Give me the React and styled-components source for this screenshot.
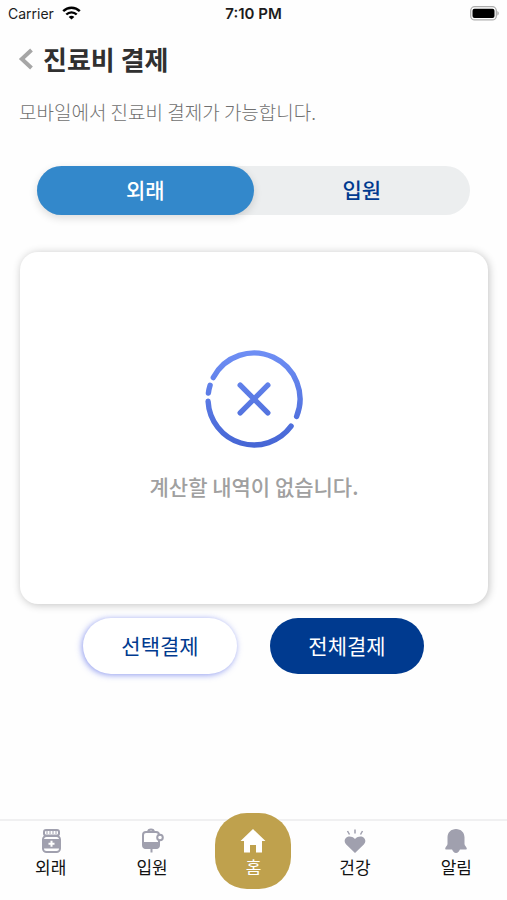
import React, { useState } from 'react';
import styled, { createGlobalStyle } from 'styled-components';

const color = {
  navy: '#003a8f',
  blue: '#3388cb',
  gold: '#bfa14d',
  icon: '#a0a0ae',
  track: '#eceeef',
};

const GlobalStyle = createGlobalStyle`
  * {
    box-sizing: border-box;
  }

  body {
    margin: 0;
    background-color: #fefefe;
    font-family: 'Noto Sans CJK KR', sans-serif;
  }

  button {
    padding: 0;
    border: 0;
    background: none;
    font-family: inherit;
    cursor: pointer;
  }
`;

const Screen = styled.div`
  display: flex;
  flex-direction: column;
  min-height: 100vh;
`;

const StatusBar = styled.div`
  display: grid;
  grid-template-columns: 1fr auto 1fr;
  align-items: center;
  height: 26px;
  padding: 0 8px;
  color: #1c1c1c;
  font-family: Inter, sans-serif;
  font-size: 14px;
`;

const Carrier = styled.div`
  display: flex;
  align-items: center;
  gap: 8px;
`;

const Clock = styled.time`
  font-size: 15px;
  font-weight: 600;
`;

const Battery = styled.svg`
  justify-self: end;
`;

const Header = styled.header`
  display: flex;
  align-items: center;
  gap: 9px;
  height: 40px;
  margin-top: 13px;
  padding: 0 18px;
`;

const BackButton = styled.button`
  display: flex;
`;

const Title = styled.h1`
  margin: 0;
  color: #303030;
  font-size: 26px;
  font-weight: 700;
  line-height: 40px;
`;

const Description = styled.p`
  margin: 18px 19px 0;
  color: #707070;
  font-size: 19px;
  font-weight: 300;
  line-height: 30px;
`;

const Tabs = styled.div`
  display: flex;
  height: 49px;
  margin: 39px 37px 0;
  border-radius: 25px;
  background-color: ${color.track};
`;

const Tab = styled.button`
  flex: 1;
  padding-bottom: 4px;
  border-radius: 25px;
  background-color: ${({ $active }) => ($active ? color.blue : 'transparent')};
  box-shadow: ${({ $active }) => ($active ? '0 3px 8px rgba(0, 0, 0, 0.14)' : 'none')};
  color: ${({ $active }) => ($active ? '#fff' : color.navy)};
  font-size: 21px;
  font-weight: 500;
`;

const Card = styled.section`
  display: flex;
  flex-direction: column;
  align-items: center;
  justify-content: center;
  gap: 22px;
  min-height: 352px;
  margin: 37px 19px 0 20px;
  padding-bottom: 4px;
  border-radius: 18px;
  background-color: #fff;
  box-shadow: 1px 1px 9px rgba(0, 0, 0, 0.24);
`;

const EmptyText = styled.p`
  margin: 0;
  color: #a0a0a0;
  font-size: 21px;
  font-weight: 500;
  line-height: 32px;
`;

const Actions = styled.div`
  display: flex;
  justify-content: center;
  gap: 33px;
  margin-top: 14px;
`;

const PayButton = styled.button`
  width: 154px;
  height: 56px;
  padding-bottom: 2px;
  border-radius: 28px;
  background-color: ${({ $primary }) => ($primary ? color.navy : '#fff')};
  box-shadow: ${({ $primary }) => ($primary ? 'none' : '-1px 1px 6px rgba(70, 90, 230, 0.6)')};
  color: ${({ $primary }) => ($primary ? '#fff' : color.navy)};
  font-size: 21px;
  font-weight: 400;
`;

const BottomNav = styled.nav`
  display: grid;
  grid-template-columns: repeat(5, 1fr);
  height: 81px;
  margin-top: auto;
  border-top: 2px solid #f0f0f1;
`;

const NavItem = styled.a`
  display: flex;
  flex-direction: column;
  align-items: center;
  padding-top: 7px;
  color: #111;
  font-size: 17px;
  line-height: 26px;
  text-decoration: none;
`;

const HomeItem = styled(NavItem)`
  justify-self: center;
  width: 76px;
  height: 76px;
  margin-top: -8px;
  padding-top: 15px;
  border-radius: 32px;
  background-color: ${color.gold};
  color: #fff;
`;

const WifiIcon = () => (
  <svg width="19" height="14" viewBox="0 0 19 14" fill="none" stroke="#000" strokeWidth="2.4">
    <path d="M1.2 5.2C5.8.6 13.2.6 17.8 5.2" />
    <path d="M4.3 8.5c2.9-2.9 7.5-2.9 10.4 0" />
    <path d="M9.5 13.6 6.7 10.9c1.6-1.4 4-1.4 5.6 0z" fill="#000" stroke="none" />
  </svg>
);

const BatteryIcon = () => (
  <Battery width="29" height="15" viewBox="0 0 29 15">
    <rect x=".7" y=".7" width="25.6" height="13.2" rx="4" fill="#fff" stroke="#adadad" strokeWidth="1.3" />
    <rect x="2.5" y="2.7" width="22" height="9.2" rx="2" fill="#000" />
    <path d="M27.3 5c2 .8 2 3.8 0 4.6z" fill="#adadad" />
  </Battery>
);

const BackIcon = () => (
  <svg width="16" height="22" viewBox="0 0 16 22" fill="none" stroke="#a6a6a6" strokeWidth="4">
    <path d="M13.5 2 3.8 11l9.7 9" />
  </svg>
);

const EmptyIcon = () => (
  <svg width="98" height="98" viewBox="0 0 98 98" fill="none" strokeLinecap="round">
    <defs>
      <linearGradient id="ring" x1="0" y1="0" x2="0" y2="98" gradientUnits="userSpaceOnUse">
        <stop offset="0" stopColor="#6f8ff5" />
        <stop offset="1" stopColor="#4565d4" />
      </linearGradient>
    </defs>
    <g stroke="url(#ring)" strokeWidth="5.4">
      <path d="M8.3 27.6A46 46 0 0 1 91.6 66.4" />
      <path d="M86.1 76.2A46 46 0 0 1 3.1 51.3" />
      <path d="M5.1 35.2Q3.9 39 3.4 43" />
      <path d="M35.2 35.2 62.8 62.8M62.8 35.2 35.2 62.8" />
    </g>
  </svg>
);

const BottleIcon = () => (
  <svg width="24" height="26" viewBox="0 0 24 26">
    <rect x="5" y="2" width="15" height="5.5" rx="2" fill="#fff" stroke={color.icon} strokeWidth="2" />
    <path d="M8 3v3M11 3v3M14 3v3M17 3v3" stroke={color.icon} />
    <rect x="4" y="8" width="17" height="16" rx="3.5" fill="#fff" stroke={color.icon} strokeWidth="2" />
    <path d="M4 11h17v9.5H4z" fill={color.icon} />
    <path d="M12.5 12.8v6M9.5 15.8h6" stroke="#fff" strokeWidth="2" />
  </svg>
);

const DripIcon = () => (
  <svg width="24" height="26" viewBox="0 0 24 26" fill="none" stroke={color.icon} strokeWidth="2">
    <path d="M8 4c.3-3.4 5.7-3.4 6 0" />
    <rect x="3" y="4" width="16" height="16" rx="3" />
    <path d="M3 14h16v3.5c0 2-1.5 3.5-3.5 3.5h-9C4.500 21 3 19.500 3 17.500z" fill={color.icon} stroke="none" />
    <path d="M11.5 20v4.5" />
    <circle cx="20" cy="9.5" r="2.8" fill="#fff" />
  </svg>
);

const HomeIcon = () => (
  <svg width="26" height="26" viewBox="0 0 26 26" fill="#fff">
    <path d="M13 1 .5 13H4v11.500h6V17h6v7.500h6V13h3.500z" />
  </svg>
);

const HeartIcon = () => (
  <svg width="24" height="26" viewBox="0 0 24 26" fill={color.icon}>
    <path d="M12 25 3.2 16.5C-1.6 11.2 6 5 12 11 18 5 25.6 11.2 20.8 16.5z" />
    <path d="M4.5 3 6.5 6.5M12 1.5v4M19.5 3l-2 3.5" stroke={color.icon} strokeWidth="1.5" />
  </svg>
);

const BellIcon = () => (
  <svg width="24" height="26" viewBox="0 0 24 26" fill={color.icon}>
    <path d="M12 1C7 1 3.500 4.500 3.500 9.500V16c0 1.500-2.300 3-2.300 4.500 0 .6.400 1 1 1h19.600c.6 0 1-.4 1-1 0-1.500-2.300-3-2.300-4.500V9.500C20.500 4.500 17 1 12 1z" />
    <path d="M8 21h8c-.5 2-2 4-4 4s-3.500-2-4-4z" />
  </svg>
);

const tabs = ['외래', '입원'];

const App = () => {
  const [active, setActive] = useState('외래');

  return (
    <Screen>
      <GlobalStyle />
      <StatusBar>
        <Carrier>
          Carrier
          <WifiIcon />
        </Carrier>
        <Clock>7:10 PM</Clock>
        <BatteryIcon />
      </StatusBar>
      <Header>
        <BackButton type="button" aria-label="뒤로">
          <BackIcon />
        </BackButton>
        <Title>진료비 결제</Title>
      </Header>
      <main>
        <Description>모바일에서 진료비 결제가 가능합니다.</Description>
        <Tabs role="tablist">
          {tabs.map((tab) => (
            <Tab
              key={tab}
              type="button"
              role="tab"
              aria-selected={tab === active}
              $active={tab === active}
              onClick={() => setActive(tab)}
            >
              {tab}
            </Tab>
          ))}
        </Tabs>
        <Card>
          <EmptyIcon />
          <EmptyText>계산할 내역이 없습니다.</EmptyText>
        </Card>
        <Actions>
          <PayButton type="button">선택결제</PayButton>
          <PayButton type="button" $primary>전체결제</PayButton>
        </Actions>
      </main>
      <BottomNav>
        <NavItem href="#outpatient">
          <BottleIcon />
          외래
        </NavItem>
        <NavItem href="#inpatient">
          <DripIcon />
          입원
        </NavItem>
        <HomeItem href="#home">
          <HomeIcon />
          홈
        </HomeItem>
        <NavItem href="#health">
          <HeartIcon />
          건강
        </NavItem>
        <NavItem href="#alarm">
          <BellIcon />
          알림
        </NavItem>
      </BottomNav>
    </Screen>
  );
};

export default App;
